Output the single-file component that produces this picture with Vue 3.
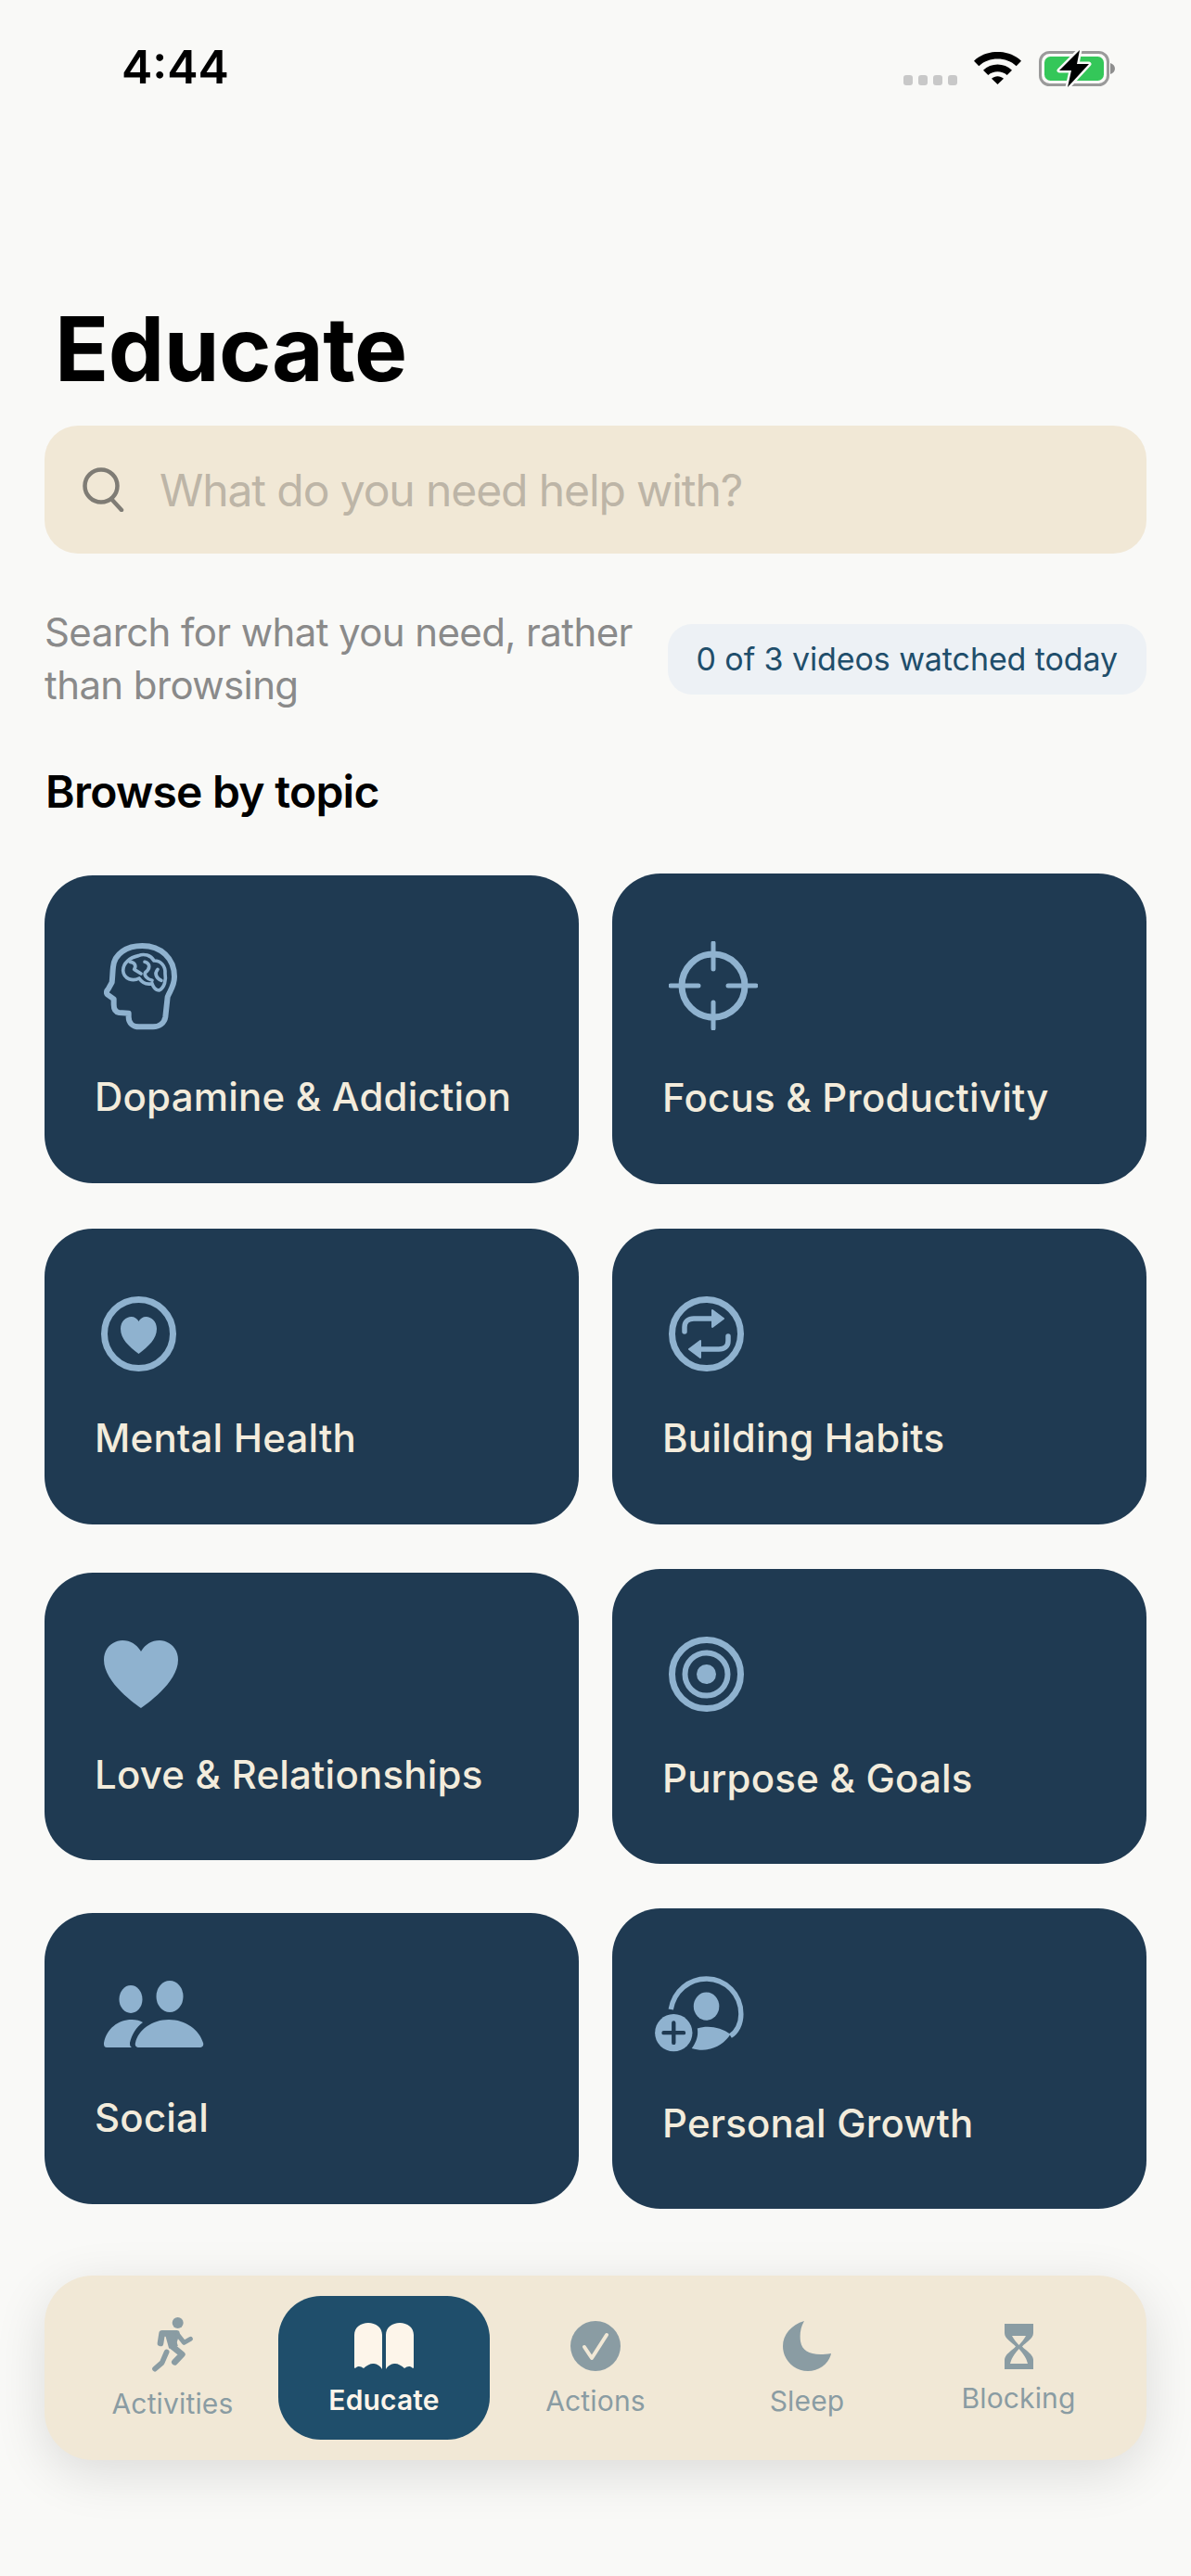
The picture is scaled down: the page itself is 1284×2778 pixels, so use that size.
<template>
  <div class="screen">
    <div class="status">
      <span class="time">4:44</span>
      <div class="status-right">
        <div class="dots"><i></i><i></i><i></i><i></i></div>
        <svg class="wifi" viewBox="0 0 153 105" width="51" height="35">
          <path d="M0 29C40-10 113-10 153 29L137 46C105 15 48 15 16 46Z" fill="#000" />
          <path d="M30 59C55 34 98 34 123 59L107 75C90 60 63 60 46 75Z" fill="#000" />
          <path d="M57 86C68 76 85 76 96 86L76.500 105Z" fill="#000" />
        </svg>
        <svg class="battery" viewBox="0 0 82 42" width="82" height="42">
          <rect x="1.500" y="3.500" width="73" height="35" rx="10" fill="none" stroke="#9a9a9a" stroke-width="3" />
          <path d="M77 15C80 16 82 18 82 21C82 24 80 26 77 27Z" fill="#8e8e8e" />
          <rect x="6" y="8" width="64" height="26" rx="6.500" fill="#34c759" />
          <path d="M44 1L22 23H35L31 41L54 16H41Z" fill="#000" stroke="#f9f9f7" stroke-width="5" stroke-linejoin="round" paint-order="stroke" />
        </svg>
      </div>
    </div>

    <h1 class="title">Educate</h1>

    <div class="search">
      <svg class="search-icon" viewBox="0 0 48 48" width="48" height="48">
        <circle cx="21" cy="20" r="17.500" fill="none" stroke="#7f7c75" stroke-width="4.500" />
        <path d="M32 34L43 46" fill="none" stroke="#7f7c75" stroke-width="4.500" stroke-linecap="round" />
      </svg>
      <span class="placeholder">What do you need help with?</span>
    </div>

    <div class="info">
      <p class="helper">Search for what you need, rather than browsing</p>
      <span class="pill">0 of 3 videos watched today</span>
    </div>

    <h2 class="browse">Browse by topic</h2>

    <div class="topics">
      <div
        v-for="topic in topics"
        :key="topic.name"
        class="card"
        :style="{ height: topic.h + 'px' }"
      >
        <div class="card-icon" :style="{ height: topic.box + 'px' }">
          <svg v-if="topic.icon === 'brain'" viewBox="66 51 237 282" width="79" height="94">
            <path d="M96 128C100 85 140 60 190 60C250 60 294 100 294 160C294 190 280 205 272 225L265 290C262 310 245 322 225 322L180 322C160 322 146 310 146 290L146 278L115 276C100 274 98 262 98 250L98 232L78 218C72 212 75 205 80 200L92 178C94 160 94 145 96 128Z" fill="none" stroke="#8fb2cf" stroke-width="18" stroke-linejoin="round" />
            <path d="M128 140C128 115 150 98 178 92C195 84 218 90 228 108C250 108 266 125 264 150C268 170 262 195 245 204C232 204 224 190 222 182C205 186 190 180 180 165C160 176 130 168 128 140Z" fill="none" stroke="#8fb2cf" stroke-width="11" stroke-linejoin="round" />
            <path d="M150 112C165 112 172 125 164 136L186 150M198 112C218 118 215 135 200 146C195 155 205 168 222 172M240 136C228 150 236 165 252 172" fill="none" stroke="#8fb2cf" stroke-width="11" stroke-linecap="round" stroke-linejoin="round" />
          </svg>
          <svg v-else-if="topic.icon === 'focus'" viewBox="0 0 96 96" width="96" height="96">
            <circle cx="48" cy="48" r="34" fill="none" stroke="#8fb2cf" stroke-width="7" />
            <path d="M48 2V30M48 66V94M2 48H32M64 48H94" fill="none" stroke="#8fb2cf" stroke-width="5" stroke-linecap="round" />
          </svg>
          <svg v-else-if="topic.icon === 'mental'" viewBox="0 0 81 81" width="81" height="81">
            <circle cx="40.500" cy="40.500" r="37" fill="none" stroke="#8fb2cf" stroke-width="7" />
            <path d="M40.500 62C30 54 21 46 21 35C21 27 27 22 32.500 22C36 22 39 24 40.500 27C42 24 45 22 48.500 22C54 22 60 27 60 35C60 46 51 54 40.500 62Z" fill="#8fb2cf" />
          </svg>
          <svg v-else-if="topic.icon === 'habits'" viewBox="0 0 81 81" width="81" height="81">
            <circle cx="40.500" cy="40.500" r="37" fill="none" stroke="#8fb2cf" stroke-width="7" />
            <path d="M17 38V33C17 27 21 24 27 24H50M64 43V48C64 54 60 57 54 57H31" fill="none" stroke="#8fb2cf" stroke-width="5.500" stroke-linecap="round" />
            <path d="M47 15L59 24L47 33ZM34 48L22 57L34 66Z" fill="#8fb2cf" stroke="#8fb2cf" stroke-width="2" stroke-linejoin="round" />
          </svg>
          <svg v-else-if="topic.icon === 'heart'" viewBox="0 0 80 73" width="80" height="73">
            <path d="M40 73C36 70 0 46 0 21C0 8 10 0 20 0C29 0 36 5 40 12C44 5 51 0 60 0C70 0 80 8 80 21C80 46 44 70 40 73Z" fill="#8fb2cf" />
          </svg>
          <svg v-else-if="topic.icon === 'goals'" viewBox="0 0 81 81" width="81" height="81">
            <circle cx="40.500" cy="40.500" r="37" fill="none" stroke="#8fb2cf" stroke-width="7" />
            <circle cx="40.500" cy="40.500" r="23" fill="none" stroke="#8fb2cf" stroke-width="6" />
            <circle cx="40.500" cy="40.500" r="10.500" fill="#8fb2cf" />
          </svg>
          <svg v-else-if="topic.icon === 'social'" viewBox="0 0 108 72" width="108" height="72">
            <ellipse cx="29" cy="20" rx="12.500" ry="15" fill="#8fb2cf" />
            <ellipse cx="71" cy="17" rx="14.500" ry="17" fill="#8fb2cf" />
            <path d="M3 72C0 72 0 69 0 67C3 52 15 42 30 42C35 42 39 43 42 45C35 50 30 58 28 67C28 69 28 71 30 72Z" fill="#8fb2cf" />
            <path d="M38 72C35 72 33 70 34 67C37 53 52 42 70 42C88 42 103 53 107 67C108 70 106 72 103 72Z" fill="#8fb2cf" />
          </svg>
          <svg v-else-if="topic.icon === 'growth'" viewBox="50 58 285 244" width="96" height="82">
            <path d="M101 165C112 105 160 67 215 67C278 67 326 118 326 180C326 212 312 238 292 250" fill="none" stroke="#8fb2cf" stroke-width="16" />
            <ellipse cx="215" cy="155" rx="41" ry="45" fill="#8fb2cf" />
            <path d="M186 226C220 215 262 222 292 245C268 283 220 306 168 290C182 272 190 250 186 226Z" fill="#8fb2cf" />
            <circle cx="110" cy="240" r="60" fill="#8fb2cf" />
            <path d="M110 208V272M78 240H142" fill="none" stroke="#1f3a52" stroke-width="13" stroke-linecap="round" />
          </svg>
        </div>
        <span class="card-label">{{ topic.name }}</span>
      </div>
    </div>

    <nav class="tabbar">
      <div
        v-for="tab in tabs"
        :key="tab.name"
        class="tab"
        :class="{ active: tab.name === 'Educate' }"
      >
        <div class="tab-icon">
          <svg v-if="tab.name === 'Activities'" class="runner" viewBox="100 55 138 180" width="46" height="60">
            <circle cx="186" cy="76" r="18" fill="#8a9ca3" />
            <path d="M130 142L135 110H182L168 152L200 178L176 203" fill="none" stroke="#8a9ca3" stroke-width="20" stroke-linecap="round" stroke-linejoin="round" />
            <path d="M186 114L206 140L227 128" fill="none" stroke="#8a9ca3" stroke-width="15" stroke-linecap="round" stroke-linejoin="round" />
            <path d="M150 170L135 205L112 225" fill="none" stroke="#8a9ca3" stroke-width="17" stroke-linecap="round" stroke-linejoin="round" />
            <path d="M160 112L172 155" stroke="#8a9ca3" stroke-width="30" />
          </svg>
          <svg v-else-if="tab.name === 'Educate'" viewBox="0 0 64 50" width="64" height="50">
            <path d="M0 13C0 5 7 0 15 0C23 0 30 5 30 13V50C27 45 23 44 20 44C17 44 13 46 10 49C7 47 4 46 1 49C0 49 0 48 0 47Z" fill="#fdf5ea" />
            <path d="M64 13C64 5 57 0 49 0C41 0 34 5 34 13V50C37 45 41 44 44 44C47 44 51 46 54 49C57 47 60 46 63 49C64 49 64 48 64 47Z" fill="#fdf5ea" />
          </svg>
          <svg v-else-if="tab.name === 'Actions'" viewBox="0 0 54 54" width="54" height="54">
            <circle cx="27" cy="27" r="27" fill="#8a9ca3" />
            <path d="M15 28L23 40L39 15" fill="none" stroke="#f1e8d6" stroke-width="4" stroke-linecap="round" stroke-linejoin="round" />
          </svg>
          <svg v-else-if="tab.name === 'Sleep'" viewBox="0 0 52 54" width="52" height="54">
            <path d="M23 0C19 7 18 14 19 22C21 34 32 38 52 35C50 46 39 54 27 54C12 54 0 42 0 27C0 15 9 4 23 0Z" fill="#8a9ca3" />
          </svg>
          <svg v-else viewBox="0 0 31 49" width="31" height="49">
            <path d="M0 0H31V10C31 16 23 20 19 24.500C23 29 31 33 31 39V49H0V39C0 33 8 29 12 24.500C8 20 0 16 0 10Z" fill="#8a9ca3" />
            <path d="M8 13H23C21 17 18 20 15.500 23C13 20 10 17 8 13ZM15.500 27C18 30 23 35 25 43H6C8 35 13 30 15.500 27Z" fill="#f1e8d6" />
          </svg>
        </div>
        <span class="tab-label" :style="{ marginTop: tab.gap + 'px' }">{{ tab.name }}</span>
      </div>
    </nav>
  </div>
</template>

<script setup>
const topics = [
  { name: 'Dopamine & Addiction', icon: 'brain', h: 332, box: 94 },
  { name: 'Focus & Productivity', icon: 'focus', h: 335, box: 97 },
  { name: 'Mental Health', icon: 'mental', h: 319, box: 81 },
  { name: 'Building Habits', icon: 'habits', h: 319, box: 81 },
  { name: 'Love & Relationships', icon: 'heart', h: 310, box: 73 },
  { name: 'Purpose & Goals', icon: 'goals', h: 318, box: 81 },
  { name: 'Social', icon: 'social', h: 314, box: 76 },
  { name: 'Personal Growth', icon: 'growth', h: 324, box: 87 }
]

const tabs = [
  { name: 'Activities', gap: 14 },
  { name: 'Educate', gap: 10 },
  { name: 'Actions', gap: 11 },
  { name: 'Sleep', gap: 11 },
  { name: 'Blocking', gap: 8 }
]
</script>

<style>
html,
body {
  margin: 0;
  background: #f9f9f7;
}
</style>

<style scoped>
.screen {
  width: 1284px;
  height: 2778px;
  box-sizing: border-box;
  padding: 0 48px;
  background: #f9f9f7;
  font-family: Inter, "Noto Sans", sans-serif;
  overflow: hidden;
}

.status {
  display: flex;
  justify-content: space-between;
  height: 110px;
  padding: 42px 34px 0 83px;
  box-sizing: border-box;
}

.time {
  font-size: 50px;
  line-height: 60px;
  font-weight: 600;
  color: #000;
}

.status-right {
  display: flex;
  align-items: flex-start;
  height: 42px;
  margin-top: 11px;
}

.dots {
  display: flex;
  gap: 6px;
  margin-top: 28px;
  margin-right: 18px;
}

.dots i {
  width: 10px;
  height: 11px;
  border-radius: 3px;
  background: #c8c8c8;
}

.wifi {
  margin-top: 3px;
  margin-right: 19px;
}

.title {
  margin: 208px 0 25px 11px;
  font-size: 96px;
  line-height: 116px;
  font-weight: 700;
  letter-spacing: -0.5px;
  color: #000;
}

.search {
  display: flex;
  align-items: center;
  height: 138px;
  padding-left: 40px;
  border-radius: 36px;
  background: #f1e8d6;
}

.search-icon {
  margin-right: 36px;
}

.placeholder {
  font-size: 48px;
  letter-spacing: -1.1px;
  color: #bdb5a7;
}

.info {
  display: flex;
  justify-content: space-between;
  align-items: center;
  margin-top: 54px;
}

.helper {
  width: 650px;
  margin: 2px 0 0;
  font-size: 42px;
  line-height: 57px;
  letter-spacing: -0.6px;
  color: #8a8a8a;
}

.pill {
  padding: 0 31px;
  height: 76px;
  line-height: 76px;
  border-radius: 26px;
  margin-top: 3px;
  font-size: 34px;
  letter-spacing: -0.1px;
  color: #1f4e6b;
  background: #edf1f5;
  white-space: nowrap;
}

.browse {
  margin: 58px 0 59px 1px;
  font-size: 48px;
  line-height: 58px;
  font-weight: 600;
  letter-spacing: -0.75px;
  color: #000;
}

.topics {
  display: grid;
  grid-template-columns: 576px 576px;
  column-gap: 36px;
  row-gap: 48px;
  align-items: center;
}

.card {
  box-sizing: border-box;
  padding: 73px 0 0 54px;
  border-radius: 52px;
  background: #1f3a52;
}

.card-icon svg {
  display: block;
}

.card-label {
  display: block;
  margin-top: 47px;
  font-size: 42px;
  line-height: 50px;
  font-weight: 500;
  letter-spacing: 0.2px;
  color: #f3ecdc;
  white-space: nowrap;
}

.card:nth-child(odd) .card-icon svg {
  margin-left: 10px;
}

.card:nth-child(even) .card-icon svg {
  margin-left: 7px;
}

.card:nth-child(3) .card-icon svg {
  margin-left: 7px;
}

.card:nth-child(8) .card-icon svg {
  margin-left: -8px;
}

.tabbar {
  display: grid;
  grid-template-columns: repeat(5, 1fr);
  margin-top: 72px;
  padding: 22px 24px;
  height: 199px;
  box-sizing: border-box;
  border-radius: 52px;
  background: #f1e8d6;
  box-shadow: 0 14px 56px rgba(0, 0, 0, 0.12);
}

.tab {
  display: flex;
  flex-direction: column;
  align-items: center;
  height: 155px;
  padding-top: 24px;
  box-sizing: border-box;
  border-radius: 46px;
  color: #8a9ca3;
}

.tab.active {
  background: #1f4e6b;
  color: #fdf5ea;
}

.tab-icon {
  display: flex;
  align-items: center;
  justify-content: center;
  height: 60px;
}

.runner {
  margin-top: -4px;
}

.tab-label {
  font-size: 30px;
  line-height: 36px;
  letter-spacing: 0.15px;
}

.tab.active .tab-label {
  font-weight: 600;
}
</style>
